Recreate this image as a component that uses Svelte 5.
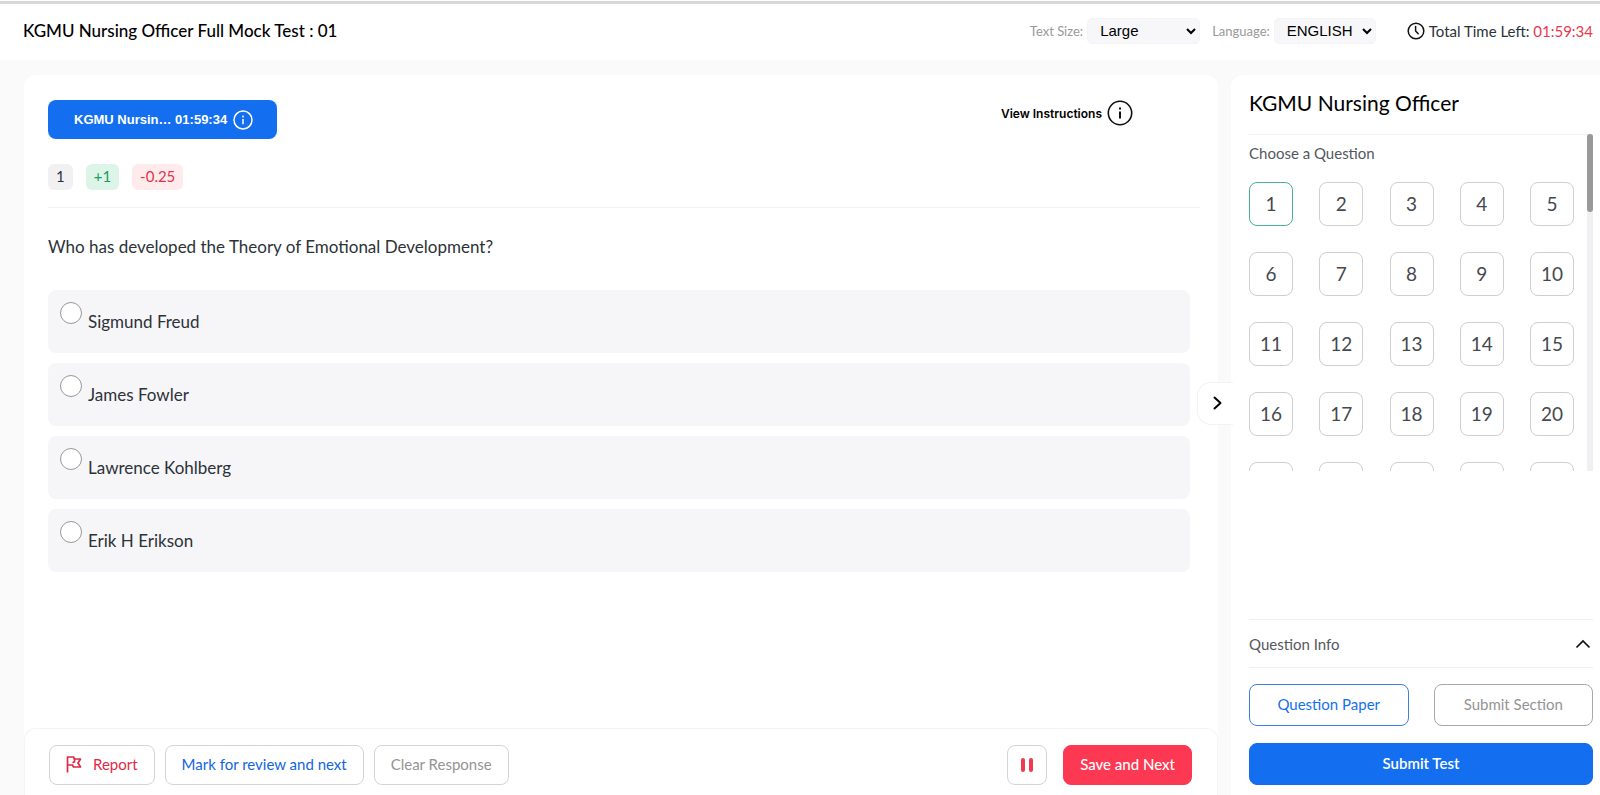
<script lang="ts">
	// ── Data ─────────────────────────────────────────────────────────

	const timeLeft = '01:59:34';
	const options = ['Sigmund Freud', 'James Fowler', 'Lawrence Kohlberg', 'Erik H Erikson'];
	const questions = Array.from({ length: 100 }, (_, i) => i + 1);

	let current = $state(1);
	let answer = $state('');

	// ── Question palette, only rows in view are rendered ─────────────

	const perRow = 5;
	const rowHeight = 70;
	const listTop = 48;
	const rowCount = Math.ceil(questions.length / perRow);
	const contentHeight = listTop + rowCount * rowHeight;

	let scrollTop = $state(0);
	let listHeight = $state(337);

	let firstRow = $derived(Math.max(0, Math.floor((scrollTop - listTop) / rowHeight)));
	let lastRow = $derived(Math.ceil((scrollTop + listHeight - listTop) / rowHeight));
	let visible = $derived(questions.slice(firstRow * perRow, lastRow * perRow));
	let thumbSize = $derived((listHeight / contentHeight) * 100);
	let thumbTop = $derived((scrollTop / contentHeight) * 100);
</script>

<div class="page">
	<header class="topbar">
		<h1>KGMU Nursing Officer Full Mock Test : 01</h1>
		<div class="settings">
			<label for="text-size">Text Size:</label>
			<select id="text-size" class="size-select">
				<option>Small</option>
				<option selected>Large</option>
			</select>
			<label for="language">Language:</label>
			<select id="language" class="lang-select">
				<option>ENGLISH</option>
				<option>HINDI</option>
			</select>
			<div class="timer">
				<svg width="18" height="18" viewBox="0 0 18 18" fill="none" stroke="#111" stroke-width="1.5">
					<circle cx="9" cy="9" r="7.8" />
					<path d="M8.6 4.500V9l2.600 2.800" stroke-linecap="round" />
				</svg>
				<span>Total Time Left: <span class="red">{timeLeft}</span></span>
			</div>
		</div>
	</header>

	<div class="body">
		<main class="content">
			<section class="question-card">
				<div class="tabs">
					<button class="section-tab">
						KGMU Nursin… {timeLeft}
						<svg width="20" height="20" viewBox="0 0 20 20" fill="none" stroke="#fff" stroke-width="1.5">
							<circle cx="10" cy="10" r="9" />
							<path d="M10 9v5.200M10 5.600v1.800" />
						</svg>
					</button>
					<button class="instructions">
						View Instructions
						<svg width="26" height="26" viewBox="0 0 26 26" fill="none" stroke="#111" stroke-width="1.6">
							<circle cx="13" cy="13" r="11.7" />
							<path d="M13 11.500v7M13 7.600v2" stroke-width="2" />
						</svg>
					</button>
				</div>

				<div class="marks">
					<span class="chip">{current}</span>
					<span class="chip plus">+1</span>
					<span class="chip minus">-0.25</span>
				</div>

				<fieldset class="options">
					<legend>Who has developed the Theory of Emotional Development?</legend>
					{#each options as option (option)}
						<label class="option">
							<input type="radio" name="answer" value={option} bind:group={answer} />
							<span>{option}</span>
						</label>
					{/each}
				</fieldset>
			</section>

			<footer class="actions">
				<button class="btn report">
					<svg width="16" height="18" viewBox="0 0 16 18" fill="none" stroke="#e02a45" stroke-width="1.7">
						<path d="M1.500 17.500V2H7.500l1 2H14.500L12 8l2.500 4H7.500l-1-2H1.500" stroke-linejoin="round" />
						<path d="M8.500 4v2.800L6.500 7.800" />
					</svg>
					Report
				</button>
				<button class="btn mark">Mark for review and next</button>
				<button class="btn clear" onclick={() => (answer = '')}>Clear Response</button>
				<button class="btn pause" aria-label="Pause">
					<svg width="14" height="16" viewBox="0 0 14 16" fill="#f03a50">
						<rect x="1" y="1" width="4" height="14" rx="2" />
						<rect x="9" y="1" width="4" height="14" rx="2" />
					</svg>
				</button>
				<button class="btn save">Save and Next</button>
			</footer>
		</main>

		<aside class="sidebar">
			<button class="collapse" aria-label="Collapse">
				<svg width="10" height="14" viewBox="0 0 10 14" fill="none" stroke="#000" stroke-width="2">
					<path d="M1.500 1.500 7.500 7l-6 5.500" stroke-linecap="round" stroke-linejoin="round" />
				</svg>
			</button>

			<h2>KGMU Nursing Officer</h2>
			<div class="palette">
				<div
					class="palette-scroll"
					bind:clientHeight={listHeight}
					onscroll={(e) => (scrollTop = e.currentTarget.scrollTop)}
				>
					<p>Choose a Question</p>
					<div
						class="grid"
						style="height: {rowCount * rowHeight}px; padding-top: {firstRow * rowHeight}px"
					>
						{#each visible as n (n)}
							<button class="number" class:active={n === current} onclick={() => (current = n)}>{n}</button>
						{/each}
					</div>
				</div>
				<div class="track">
					<div class="thumb" style="height: {thumbSize}%; top: {thumbTop}%"></div>
				</div>
			</div>

			<div class="sidebar-bottom">
				<button class="info">
					Question Info
					<svg width="16" height="10" viewBox="0 0 16 10" fill="none" stroke="#111" stroke-width="1.7">
						<path d="M1.500 8.500 8 2l6.500 6.500" />
					</svg>
				</button>
				<div class="pair">
					<button class="btn paper">Question Paper</button>
					<button class="btn section">Submit Section</button>
				</div>
				<button class="btn submit">Submit Test</button>
			</div>
		</aside>
	</div>
</div>

<style>
	:global(body) {
		background: #fafafa;
		font-family: Lato, sans-serif;
		color: #2c3238;
	}

	.page,
	.page * {
		box-sizing: border-box;
	}

	.page {
		height: 100vh;
		min-height: 760px;
		display: flex;
		flex-direction: column;
		border-top: 1px solid #fff;
	}

	button {
		font-family: inherit;
		cursor: pointer;
	}

	/* ── Top bar ── */

	.topbar {
		height: 59px;
		flex-shrink: 0;
		display: flex;
		align-items: center;
		justify-content: space-between;
		padding: 0 7px 3px 23px;
		background: #fff;
		border-top: 3px solid #d8d8d8;
	}

	.topbar h1 {
		margin: 0;
		font-size: 17px;
		font-weight: 500;
		color: #000;
	}

	.settings {
		display: flex;
		align-items: center;
		font-size: 15px;
	}

	.settings label {
		font-size: 13px;
		color: #999;
	}

	select {
		height: 26px;
		margin: 0 12px 0 4px;
		padding: 0 0 0 8px;
		border: 1px solid #f4f4f6;
		border-radius: 5px;
		background-color: #f7f7f9;
		font-family: 'Liberation Sans', Arial, sans-serif;
		font-size: 15px;
		color: #000;
	}

	.size-select {
		width: 113px;
	}

	.lang-select {
		width: 102px;
		margin-right: 31px;
	}

	.timer {
		display: flex;
		align-items: center;
		gap: 4px;
	}

	.red {
		color: #e8384f;
	}

	/* ── Question ── */

	.body {
		flex: 1;
		min-height: 0;
		display: flex;
		gap: 13px;
		padding: 15px 0 0 24px;
	}

	.content {
		flex: 1;
		min-width: 0;
		display: flex;
		flex-direction: column;
		background: #fff;
		border-radius: 12px 12px 0 0;
	}

	.question-card {
		flex: 1;
		padding: 25px 18px 0 24px;
	}

	.tabs {
		display: flex;
		justify-content: space-between;
		align-items: flex-start;
		padding-right: 67px;
	}

	.section-tab {
		display: flex;
		align-items: center;
		gap: 6px;
		height: 39px;
		padding: 0 24px 0 26px;
		border: none;
		border-radius: 8px;
		background: #146ff0;
		color: #fff;
		font-family: 'Liberation Sans', Arial, sans-serif;
		font-size: 13px;
		font-weight: 700;
	}

	.instructions {
		display: flex;
		align-items: center;
		gap: 5px;
		padding: 0;
		border: none;
		background: none;
		color: #000;
		font-family: Inter, sans-serif;
		font-size: 12px;
		font-weight: 600;
	}

	.marks {
		display: flex;
		gap: 13px;
		padding: 25px 0 17px;
		border-bottom: 1px solid #f2f2f4;
	}

	.chip {
		height: 26px;
		padding: 0 8px;
		border-radius: 6px;
		background: #f1f1f4;
		font-size: 15px;
		line-height: 25px;
	}

	.plus {
		background: #dcf5e8;
		color: #1f9a60;
	}

	.minus {
		background: #ffebec;
		color: #e0344d;
	}

	.options {
		margin: 0 10px 0 0;
		padding: 0;
		border: none;
		display: flex;
		flex-direction: column;
		gap: 10px;
	}

	legend {
		padding: 28px 0 32px;
		font-size: 17px;
		line-height: 22px;
	}

	.option {
		display: flex;
		align-items: flex-start;
		gap: 6px;
		height: 63px;
		padding: 12px;
		border-radius: 8px;
		background: #f6f6f9;
		font-size: 17px;
		line-height: 40px;
		cursor: pointer;
	}

	.option input {
		appearance: none;
		width: 22px;
		height: 22px;
		margin: 0;
		border: 1px solid #98989a;
		border-radius: 50%;
		background: #fff;
	}

	.option input:checked {
		border: 6px solid #146ff0;
	}

	/* ── Buttons ── */

	.btn {
		height: 40px;
		padding: 0 16px 2px;
		border: 1px solid #d4d4d6;
		border-radius: 8px;
		background: #fff;
		font-size: 15px;
		white-space: nowrap;
	}

	.actions {
		display: flex;
		gap: 10px;
		padding: 16px 25px 10px 24px;
		border: 1px solid #f4f4f4;
		border-bottom: none;
		border-radius: 12px 12px 0 0;
		background: #fff;
	}

	.report {
		display: flex;
		align-items: center;
		gap: 11px;
		color: #e02a45;
	}

	.mark {
		color: #1266dc;
	}

	.clear,
	.section {
		color: #949494;
	}

	.pause {
		width: 40px;
		margin: 0 6px 0 auto;
		padding: 0;
		display: flex;
		align-items: center;
		justify-content: center;
	}

	.save {
		border-color: #fc3852;
		background: #fc3852;
		color: #fff;
		font-weight: 500;
	}

	/* ── Sidebar ── */

	.sidebar {
		position: relative;
		width: 369px;
		flex-shrink: 0;
		display: flex;
		flex-direction: column;
		padding: 0 7px 10px 18px;
		border-radius: 12px 0 0 0;
		background: #fff;
	}

	.collapse {
		position: absolute;
		top: 307px;
		left: -34px;
		width: 36px;
		height: 43px;
		padding: 2px 0 0 4px;
		border: 1px solid #f2f2f2;
		border-right: none;
		border-radius: 14px 0 0 14px;
		background: #fff;
	}

	h2 {
		margin: 0;
		padding: 14px 0 18px;
		font-size: 21px;
		font-weight: 400;
		line-height: 27px;
		color: #000;
	}

	.palette {
		display: flex;
		height: calc(100vh - 458px);
	}

	.palette-scroll {
		flex: 1;
		overflow-y: auto;
		scrollbar-width: none;
		border-top: 1px solid #f2f2f4;
	}

	.palette p {
		margin: 0;
		padding: 8px 0 19px;
		font-size: 15px;
		line-height: 20px;
		color: #54585e;
	}

	.grid {
		display: grid;
		grid-template-columns: repeat(5, 44px);
		justify-content: space-between;
		align-content: start;
		row-gap: 26px;
		padding-right: 13px;
	}

	.number {
		height: 44px;
		padding: 0 0 2px;
		border: 1px solid #cfcfd1;
		border-radius: 8px;
		background: #fff;
		color: #45494f;
		font-size: 19px;
	}

	.number.active {
		border-color: #46b487;
	}

	.track {
		position: relative;
		width: 6px;
		background: #f0f0f2;
	}

	.thumb {
		position: absolute;
		width: 100%;
		border-radius: 3px;
		background: #999;
	}

	.sidebar-bottom {
		margin-top: auto;
	}

	.info {
		width: 100%;
		height: 49px;
		display: flex;
		align-items: center;
		justify-content: space-between;
		padding: 0 2px 0 0;
		border: solid #f0f0f2;
		border-width: 1px 0;
		background: none;
		color: #54585e;
		font-size: 15px;
	}

	.pair {
		display: grid;
		grid-template-columns: 1fr 1fr;
		gap: 25px;
		padding: 16px 0 17px;
	}

	.sidebar-bottom .btn {
		height: 42px;
	}

	.paper {
		border-color: #3d7fe0;
		color: #146ff0;
	}

	.section {
		border-color: #a8a8a8;
	}

	.submit {
		width: 100%;
		border-color: #146ff0;
		background: #146ff0;
		color: #fff;
		font-weight: 600;
	}
</style>
